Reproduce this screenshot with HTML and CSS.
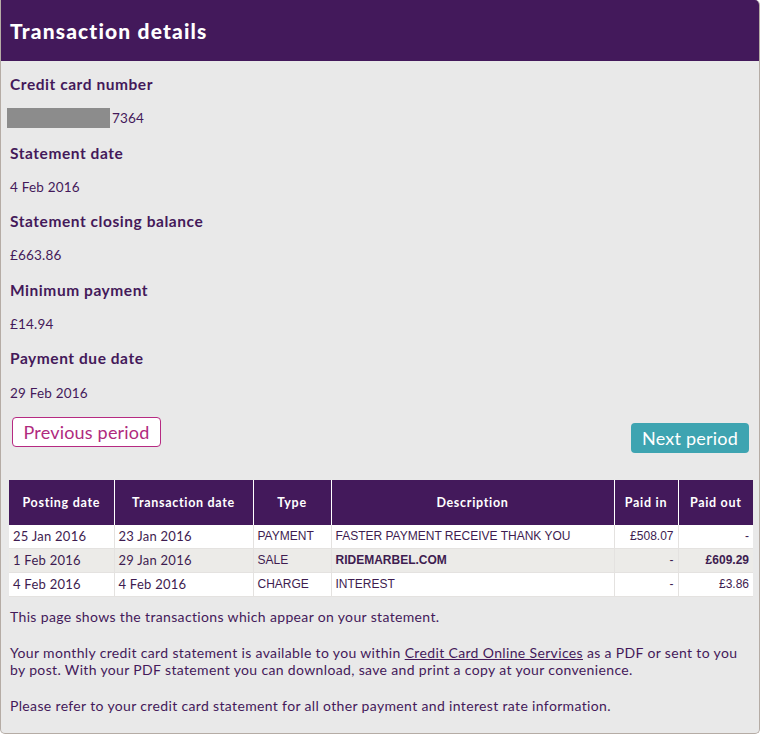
FILE: index.html
```html
<!DOCTYPE html>
<html lang="en">
<head>
<meta charset="utf-8">
<title>Transaction details</title>
<link rel="stylesheet" href="styles.css">
</head>
<body>
<div class="panel">
  <div class="panel-head"><h1>Transaction details</h1></div>
  <div class="panel-body">
    <dl class="details">
      <dt>Credit card number</dt>
      <dd><span class="mask"></span>7364</dd>
      <dt>Statement date</dt>
      <dd>4 Feb 2016</dd>
      <dt>Statement closing balance</dt>
      <dd>£663.86</dd>
      <dt>Minimum payment</dt>
      <dd>£14.94</dd>
      <dt>Payment due date</dt>
      <dd>29 Feb 2016</dd>
    </dl>
    <div class="periods">
      <a class="btn btn-prev" href="#">Previous period</a>
      <a class="btn btn-next" href="#">Next period</a>
    </div>
    <table class="tx">
      <colgroup>
        <col class="c1"><col class="c2"><col class="c3"><col class="c4"><col class="c5"><col class="c6">
      </colgroup>
      <thead>
        <tr>
          <th>Posting date</th>
          <th>Transaction date</th>
          <th>Type</th>
          <th>Description</th>
          <th>Paid in</th>
          <th>Paid out</th>
        </tr>
      </thead>
      <tbody>
        <tr>
          <td class="date">25 Jan 2016</td>
          <td class="date">23 Jan 2016</td>
          <td class="ar">PAYMENT</td>
          <td class="ar">FASTER PAYMENT RECEIVE THANK YOU</td>
          <td class="ar num">£508.07</td>
          <td class="ar num">-</td>
        </tr>
        <tr class="alt">
          <td class="date">1 Feb 2016</td>
          <td class="date">29 Jan 2016</td>
          <td class="ar">SALE</td>
          <td class="ar strong">RIDEMARBEL.COM</td>
          <td class="ar num">-</td>
          <td class="ar num strong">£609.29</td>
        </tr>
        <tr>
          <td class="date">4 Feb 2016</td>
          <td class="date">4 Feb 2016</td>
          <td class="ar">CHARGE</td>
          <td class="ar">INTEREST</td>
          <td class="ar num">-</td>
          <td class="ar num">£3.86</td>
        </tr>
      </tbody>
    </table>
    <div class="notes">
      <p>This page shows the transactions which appear on your statement.</p>
      <p>Your monthly credit card statement is available to you within <a href="#">Credit Card Online Services</a> as a PDF or sent to you by post. With your PDF statement you can download, save and print a copy at your convenience.</p>
      <p>Please refer to your credit card statement for all other payment and interest rate information.</p>
    </div>
  </div>
</div>
</body>
</html>
```

FILE: styles.css
```css
html, body {
  margin: 0;
  padding: 0;
  background: #ffffff;
}
body {
  font-family: "Lato", "Noto Sans", sans-serif;
  color: #44195a;
}
.panel {
  width: 758px;
  border: 1px solid #b5aca5;
  border-top: none;
  border-radius: 0 5px 5px 5px;
  background: #e9e9e9;
  overflow: hidden;
}
.panel-head {
  background: #43195b;
  height: 61px;
  display: flex;
  align-items: center;
  padding-left: 9px;
}
.panel-head h1 {
  margin: 0;
  color: #ffffff;
  font-size: 21px;
  font-weight: 900;
  letter-spacing: 1.15px;
  padding-bottom: 1px;
}
.panel-body {
  padding: 13px 6px 19px 8px;
}
.details {
  margin: 0 0 0 1px;
}
.details dt {
  font-size: 15.5px;
  font-weight: 700;
  line-height: 20px;
  margin: 0 0 14.3px 0;
  letter-spacing: 0.55px;
}
.details dd {
  margin: 0 0 14.3px 0;
  font-size: 13.5px;
  line-height: 20px;
  display: flex;
  align-items: center;
  letter-spacing: 0.2px;
}
.mask {
  display: inline-block;
  width: 103px;
  height: 20px;
  background: #8c8c8c;
  margin-left: -3px;
  margin-right: 2px;
}
.periods {
  display: flex;
  justify-content: space-between;
  align-items: flex-start;
  padding: 0 4px 0 3px;
  margin-top: 3px;
}
.btn {
  display: inline-flex;
  align-items: center;
  justify-content: center;
  height: 30px;
  box-sizing: border-box;
  border-radius: 4px;
  font-size: 18px;
  text-decoration: none;
  padding: 0 8px;
  letter-spacing: 0.2px;
}
.btn-prev {
  width: 149px;
  border: 1px solid #b62a82;
  background: #ffffff;
  color: #b02a7e;
}
.btn-next {
  width: 118px;
  margin-top: 6px;
  background: #3ea4b1;
  color: #ffffff;
}
.tx {
  margin-top: 27px;
  width: 744px;
  border-collapse: collapse;
  table-layout: fixed;
  font-size: 12px;
}
.c1 { width: 105px; }
.c2 { width: 139px; }
.c3 { width: 78px; }
.c4 { width: 283px; }
.c5 { width: 64px; }
.c6 { width: 75px; }
.tx th {
  background: #43195b;
  color: #ffffff;
  font-weight: 700;
  font-size: 12.5px;
  height: 45px;
  padding: 0 4px;
  text-align: center;
  border-left: 1px solid #ffffff;
  letter-spacing: 0.7px;
}
.tx th:first-child {
  border-left: none;
}
.tx td {
  height: 23px;
  padding: 0 4px;
  background: #ffffff;
  border-left: 1px solid #e4e2e0;
  border-bottom: 1px solid #e4e2e0;
  white-space: nowrap;
  color: #3e1c50;
}
.tx td:first-child {
  border-left: none;
}
.tx tr.alt td {
  background: #ecebe8;
}
.tx td.date {
  font-family: "Lato", "Noto Sans", sans-serif;
  font-size: 13px;
  letter-spacing: 0.25px;
}
.tx td.ar {
  font-family: "Liberation Sans", Arial, sans-serif;
  font-size: 12px;
}
.tx td.num {
  text-align: right;
}
.tx td.strong {
  font-weight: 700;
}
.notes {
  margin-top: 11px;
  padding-left: 1px;
  font-size: 14px;
  line-height: 17px;
  letter-spacing: 0.35px;
}
.notes p {
  margin: 0 0 19px 0;
}
.notes p:last-child {
  margin-bottom: 0;
}
.notes a {
  color: #44195a;
  text-decoration: underline;
}
```
